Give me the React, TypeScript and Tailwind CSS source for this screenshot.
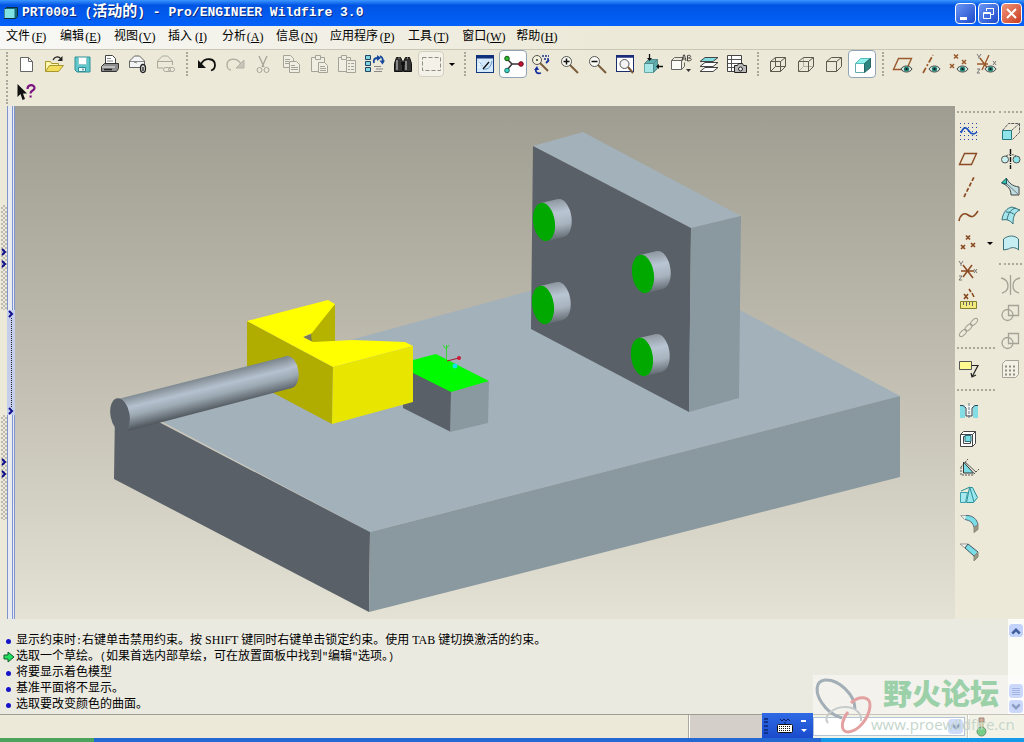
import type { ReactNode } from "react";

/* ---------- helpers ---------- */

function Ic({ children }: { children: ReactNode }) {
  return (
    <svg viewBox="0 0 24 24" className="size-6 shrink-0" fill="none" stroke="#555" strokeWidth="1" aria-hidden="true">
      {children}
    </svg>
  );
}

/* Chinese glyphs keep the base size; Latin words are serif, punctuation is half width. */
function Mixed({ text }: { text: string }) {
  const parts = text.split(/([\x20-\x7e]+)/);
  return (
    <>
      {parts.map((part, i) =>
        i % 2 === 1 ? (
          <span
            key={i}
            className={/[A-Z]/.test(part) ? "whitespace-pre font-['Liberation_Serif',serif]" : "whitespace-pre text-[10px]"}
          >
            {part}
          </span>
        ) : (
          part
        ),
      )}
    </>
  );
}

const eye = (
  <g stroke="none">
    <path d="M10 17c2-4 9-4 11 0c-2 4-9 4-11 0z" fill="#cfe6e0" stroke="#444" strokeWidth="1" />
    <circle cx="15.500" cy="17" r="2.600" fill="#1f7f72" />
    <circle cx="15.500" cy="17" r="1.100" fill="#111" />
  </g>
);

/* ---------- icons ---------- */

const icons: Record<string, ReactNode> = {
  new: (
    <>
      <path d="M6.5 5.500h8l4 4v10h-12z" fill="#fff" stroke="#666" />
      <path d="M14.500 5.500v4h4" stroke="#666" />
    </>
  ),
  open: (
    <>
      <path d="M3.500 19V9.500h5l1 2h7v3" fill="#fdf7b0" stroke="#a8962e" />
      <path d="M3.500 19.500l4-6h14l-5 6z" fill="#f2dd5c" stroke="#a8962e" />
      <path d="M11 8c2-4 6-4 8-1" stroke="#222" strokeWidth="1.300" />
      <path d="M20.500 4v5h-5z" fill="#222" stroke="none" />
    </>
  ),
  save: (
    <>
      <path d="M5 5h15v15H7l-2-2z" fill="#5ec8cc" stroke="#338f96" />
      <path d="M8.500 5.500h8v7h-8z" fill="#fff" stroke="#8fc7ca" />
      <path d="M8.500 15.500h7v4h-7z" fill="#e8fbfb" stroke="#338f96" />
      <path d="M13 16.500v2" stroke="#247" />
    </>
  ),
  print: (
    <>
      <path d="M7.500 11.500v-8h7l3 3v5z" fill="#fff" stroke="#444" />
      <path d="M9 6.500h4M9 9h6" stroke="#888" />
      <path d="M3.500 14.500l3-3h14v5l-2 3h-15z" fill="#8d8d8d" stroke="#333" />
      <path d="M4 15h13" stroke="#eee" />
      <path d="M6 17.500h8" stroke="#222" strokeWidth="1.500" />
    </>
  ),
  mail: (
    <>
      <path d="M3.500 15.500V9l5-5h5l5 5v6.500z" fill="#f4f4f4" stroke="#666" />
      <path d="M4 9.500h14M8 10l3 1" stroke="#888" />
      <ellipse cx="17" cy="16.500" rx="2.500" ry="4" fill="#ddd" stroke="#222" strokeWidth="1.300" />
      <path d="M17 15v4" stroke="#222" strokeWidth="1.300" />
    </>
  ),
  mailLink: (
    <g stroke="#aaa89c">
      <path d="M3.500 16V9l5-5h5l5 5v4M3.500 9.500h15M3.500 16h6" />
      <rect x="9.500" y="15.500" width="7" height="4" rx="2" />
      <rect x="14.500" y="15.500" width="6" height="4" rx="2" />
    </g>
  ),
  undo: (
    <>
      <path d="M6 12c4-7 14-6 14 1c0 3-2 5-4 5.500" stroke="#111" strokeWidth="1.800" />
      <path d="M3 8v8h8z" fill="#111" stroke="none" />
    </>
  ),
  redo: (
    <>
      <path d="M18 12c-4-7-14-6-14 1c0 3 2 5 4 5" stroke="#b4b2a5" strokeWidth="1.500" />
      <path d="M21 8v8h-8z" fill="#c8c6b8" stroke="#b4b2a5" />
    </>
  ),
  cut: (
    <g stroke="#a5a397">
      <path d="M8 4l5 11M16 4l-5 11" strokeWidth="1.300" />
      <circle cx="8.500" cy="18" r="2.500" />
      <circle cx="15.500" cy="18" r="2.500" />
    </g>
  ),
  copy: (
    <g stroke="#a5a397" fill="#f0eee2">
      <path d="M4.500 3.500h7l3 3v9h-10z" />
      <path d="M10.500 9.500h7l3 3v8h-10z" />
      <path d="M6 7.500h5M6 9.500h4M6 11.500h4M12 13.500h4M12 15.500h7M12 17.500h7" />
    </g>
  ),
  paste: (
    <g stroke="#a5a397" fill="#f0eee2">
      <path d="M4.500 5.500h13v14h-13z" />
      <path d="M8.500 7.500v-4h5v4z" />
      <path d="M11.500 10.500h6l3 3v7h-9z" />
      <path d="M13 14.500h5M13 16.500h6M13 18.500h6" />
    </g>
  ),
  pasteSpecial: (
    <g stroke="#a5a397" fill="#f0eee2">
      <path d="M3.500 5.500h12v14h-12z" />
      <path d="M6.500 7.500v-4h5v4z" />
      <path d="M11.500 8.500h9v12h-9z" />
      <path d="M13 11.500h2M16 11.500h3M13 14.500h2M16 14.500h3M13 17.500h2M16 17.500h3" />
    </g>
  ),
  regen: (
    <>
      <path d="M2.500 3.500h5v4h-5zM2.500 9.500h5v4h-5zM2.500 15.500h5v4h-5z" fill="#7fd6dc" stroke="#246" />
      <path d="M11 11c-1-4 1-5 4-5" stroke="#15479c" strokeWidth="1.800" />
      <path d="M14 3l4 3-4 3zM16.500 8.500l3 4 2.500-4z" fill="#15479c" stroke="none" />
      <path d="M20 9c0-3-1-4-3-5" stroke="#15479c" strokeWidth="1.600" />
      <path d="M11 14.500h7M13 17h7M11 19.500h8" stroke="#888" />
    </>
  ),
  find: (
    <g fill="#333" stroke="#111">
      <path d="M5.500 5.500h4l2 4v10h-8v-8z" />
      <path d="M14.500 5.500h4l2 6v8h-8v-10z" />
      <path d="M10 11.500h4" strokeWidth="3" />
      <path d="M6 8v10M15 9v9M7.500 6h1M16 6h1" stroke="#ddd" />
    </g>
  ),
  select: <rect x="3.500" y="5.500" width="18" height="13" stroke="#8f8d82" strokeDasharray="4 2" />,
  sketchView: (
    <>
      <rect x="3.500" y="3.500" width="17" height="17" fill="#d4eafc" stroke="#123a7c" />
      <path d="M3 5h18" stroke="#10307c" strokeWidth="3" />
      <path d="M10 17c6 1 8-3 9-8" stroke="#5b93c8" />
      <path d="M5 8l6 8" stroke="#7fa9d4" strokeDasharray="2 1" />
      <path d="M5 9h3M5 12h2M5 15h2" stroke="#fff" />
      <path d="M10 17l6-7" stroke="#111" strokeWidth="1.300" />
    </>
  ),
  nodes: (
    <>
      <path d="M6 7l5 5h8M11 12l-5 6" stroke="#333" strokeWidth="1.500" />
      <circle cx="6" cy="6.500" r="2.300" fill="#2bb52b" stroke="#175c17" />
      <circle cx="20" cy="12" r="2.300" fill="#c31432" stroke="#650a1c" />
      <circle cx="6" cy="18.500" r="2.300" fill="#3fd6c8" stroke="#17665c" />
    </>
  ),
  zoomSpin: (
    <>
      <path d="M11 11l8 8" stroke="#7a5c3a" strokeWidth="2" />
      <circle cx="8" cy="8" r="4.500" fill="#f4f2dd" stroke="#555" />
      <circle cx="8" cy="8" r="1" fill="#333" stroke="none" />
      <path d="M13 4h7M15 7h5" stroke="#15308c" strokeDasharray="2 1" strokeWidth="1.500" />
      <path d="M20 8l-3 3M12 21c-4 1-6-1-5-4" stroke="#15309c" strokeWidth="1.800" />
      <path d="M5 18l3-4 2 4z" fill="#15309c" stroke="none" />
    </>
  ),
  zoomIn: (
    <>
      <path d="M13 13l8 8" stroke="#7a5c3a" strokeWidth="2" />
      <circle cx="9.500" cy="9.500" r="5" fill="#fbfbf5" />
      <path d="M6.500 9.500h6M9.500 6.500v6" stroke="#111" strokeWidth="1.500" />
    </>
  ),
  zoomOut: (
    <>
      <path d="M13 13l8 8" stroke="#7a5c3a" strokeWidth="2" />
      <circle cx="9.500" cy="9.500" r="5" fill="#fbfbf5" />
      <path d="M6.500 9.500h6" stroke="#111" strokeWidth="1.500" />
    </>
  ),
  refit: (
    <>
      <rect x="3.500" y="3.500" width="17" height="16" fill="#fff" stroke="#1a2d6c" />
      <path d="M3 4.500h18" stroke="#1a2d7c" strokeWidth="2.500" />
      <circle cx="11.500" cy="12" r="4.500" fill="#f4f4f4" />
      <path d="M15 15l5 6" stroke="#7a5c3a" strokeWidth="2" />
    </>
  ),
  orient: (
    <>
      <path d="M3.500 11.500h9v9h-9z" fill="#a6e6e6" stroke="#6aa" />
      <path d="M3.500 11.500l4-4h9l-4 4zM12.500 20.500l4-4v-9l-4 4z" fill="#5faeb0" stroke="#588" />
      <path d="M8.500 2v5M22 14.500h-5" stroke="#111" strokeWidth="1.300" />
      <path d="M6 6h5l-2.500 3zM18 12v5l-3-2.500z" fill="#111" stroke="none" />
    </>
  ),
  named: (
    <>
      <path d="M2.500 8.500h10v9h-10z" fill="#fbfbf7" stroke="#666" />
      <path d="M2.500 8.500l3-3h9l-2 3M12.500 17.500l3-3v-4" stroke="#666" />
      <path d="M13 9l1.500-6h1L17 9M13.500 7h3M18.500 9V3.500c4-1 4 2 1 2.500c4 0 4 3-1 3" stroke="#444" />
      <path d="M17 17h5l-2.500 3z" fill="#333" stroke="none" />
    </>
  ),
  layers: (
    <g stroke="#444">
      <path d="M3 19.500l5-4h13l-5 4z" fill="#fff" />
      <path d="M3 14.500l5-4h13l-5 4z" fill="#fff" />
      <path d="M3 9.500l5-4h13l-5 4z" fill="#7fdde0" />
    </g>
  ),
  viewMgr: (
    <>
      <path d="M2.500 3.500h14v16h-14z" fill="#fff" stroke="#444" />
      <path d="M2.500 7.500h14M2.500 11.500h14M2.500 15.500h14M6.500 3.500v16" stroke="#555" />
      <path d="M9.500 13.500h3l1-2h4l1 2h3v7h-12z" fill="#b8b8b8" stroke="#222" />
      <circle cx="15.500" cy="17" r="2" fill="#eee" stroke="#222" />
    </>
  ),
  wire: <path d="M4.500 9.500h10v10h-10zM9.500 5.500h10v9h-10zM4.500 9.500l5-4M14.500 9.500l5-4M4.500 19.500l5-5M14.500 19.500l5-5" stroke="#5c5a4c" />,
  hidden: (
    <>
      <path d="M9.500 6v8.500h10M9.500 14.500l-5 5" stroke="#b0ae9e" />
      <path d="M4.500 9.500h10v10h-10zM4.500 9.500l5-4h10l-5 4M14.500 19.500l5-5v-9" stroke="#5c5a4c" />
    </>
  ),
  noHidden: <path d="M4.500 9.500h10v10h-10zM4.500 9.500l5-4h10l-5 4M14.500 19.500l5-5v-9" stroke="#5c5a4c" />,
  shaded: (
    <>
      <path d="M5.500 11.500h9v9h-9z" fill="#fff" stroke="#6aa" />
      <path d="M5.500 11.500l5-5h10l-6 5z" fill="#8ff0ea" stroke="#5bb" />
      <path d="M14.500 20.500v-9l6-5v9z" fill="#2f8580" stroke="#266" />
    </>
  ),
  datumPlane: (
    <>
      <path d="M2.500 17.500l5-11h13l-5 11z" stroke="#9a5a2c" strokeWidth="1.400" />
      {eye}
    </>
  ),
  datumAxis: (
    <>
      <path d="M4 21L14 3" stroke="#9a5a2c" strokeWidth="1.700" strokeDasharray="6 2 2 2" />
      {eye}
    </>
  ),
  datumPoint: (
    <>
      <path d="M7 2.500l4 4M11 2.500l-4 4M3 12l4 4M7 12l-4 4M15 8l4 4M19 8l-4 4" stroke="#9a5a2c" strokeWidth="1.500" />
      {eye}
    </>
  ),
  datumCsys: (
    <>
      <path d="M2 12h11M5 6l8 11M14 3L7 18" stroke="#9a5a2c" strokeWidth="1.400" />
      <path d="M2 2l2 3 2-3M4 5v2M18 9l3 4M21 9l-3 4M2 17h3l-3 4h3" stroke="#777" />
      {eye}
    </>
  ),
  help: (
    <>
      <path d="M3.500 4v13l3-3 2 6 2.500-1-2-5.500h4z" fill="#111" stroke="none" />
      <path d="M13.500 9c0-5 7-5 7-1c0 3-4 2-4 5.500" stroke="#7c1482" strokeWidth="2.200" />
      <path d="M15.500 15.500h2.200v2h-2.200z" fill="#7c1482" stroke="none" />
    </>
  ),
  sketch: (
    <>
      <path d="M3 4.500h18M3 8.500h18M3 12.500h18M3 16.500h18M3 20.500h18" stroke="#2846a8" strokeDasharray="1 3" />
      <path d="M4 14c3-8 6-5 8-2s5 4 8 1" stroke="#1c50c0" strokeWidth="1.700" />
    </>
  ),
  plane: <path d="M2.500 17.500l5-11h12l-5 11z" stroke="#8a4a22" strokeWidth="1.400" />,
  axis: <path d="M7 22L17 2" stroke="#8a4a22" strokeWidth="1.700" strokeDasharray="4 2" />,
  curve: <path d="M2 18c1-6 5-9 9-6s6 2 10-4" stroke="#8a4a22" strokeWidth="1.600" />,
  points: <path d="M9 4.500l4 4M13 4.500l-4 4M4 14l4 4M8 14l-4 4M14 12l4 4M18 12l-4 4" stroke="#8a4a22" strokeWidth="1.700" />,
  csys: (
    <>
      <path d="M4 12h13M6 6l10 13M15 6L6 18" stroke="#8a4a22" strokeWidth="1.500" />
      <path d="M2 2l2 3 2-3M4 5v2M17 10l3 4M20 10l-3 4M2 17h3l-3 4h3" stroke="#777" />
    </>
  ),
  analysis: (
    <>
      <path d="M7 7l4 5M11 7l-4 5M12 2l2 3M15 6l2 4" stroke="#8a4a22" strokeWidth="1.600" />
      <path d="M3.500 14.500h16v7h-16z" fill="#f2ea7c" stroke="#85802c" />
      <path d="M6.500 15v3M9.500 15v4M12.500 15v3M15.500 15v4" stroke="#666" />
    </>
  ),
  chain: (
    <g stroke="#a09e92">
      <ellipse cx="6" cy="18" rx="4.500" ry="2.200" transform="rotate(-45 6 18)" />
      <ellipse cx="11.500" cy="12.500" rx="4.500" ry="2.200" transform="rotate(-45 11.500 12.500)" />
      <ellipse cx="17" cy="7" rx="4.500" ry="2.200" transform="rotate(-45 17 7)" />
    </g>
  ),
  annotate: (
    <>
      <path d="M2.500 4.500h12v8h-12z" fill="#fdf890" stroke="#555" />
      <path d="M15 8.500h6L15 20M14 16l1 4 4-2" stroke="#222" strokeWidth="1.200" />
    </>
  ),
  hole: (
    <>
      <path d="M3 6h5v13H3zM16 6h5v13h-5z" fill="#84dce4" stroke="none" />
      <path d="M3 6.500h3l3 2.500v8h6V9l3-2.500h3" fill="#f6f6ee" stroke="#345" />
      <path d="M12 4v16" strokeDasharray="3 1" stroke="#678" />
    </>
  ),
  shell: (
    <>
      <path d="M3.500 7.500l3-3h12v12l-3 3h-12z" fill="#fff" stroke="#444" />
      <path d="M3.500 7.500h12v12M15.500 7.500l3-3M6.500 9.500h7v7h-7z" stroke="#444" fill="none" />
      <path d="M8 8.500h6v6H8z" fill="#7adce4" stroke="#276f78" />
    </>
  ),
  rib: (
    <>
      <path d="M4 12l7-8M4 12v8h12l6-6" stroke="#555" strokeDasharray="2 1" />
      <path d="M6.500 7v11h10z" fill="#7adce4" stroke="#333" />
      <path d="M8 7l11 10" stroke="#555" />
    </>
  ),
  draft: (
    <>
      <path d="M3.500 9.500h7l-2 10h-5z" fill="#a7e9ee" stroke="#3aa0aa" />
      <path d="M9.500 19.500l3-15h3l5 10-4 5z" fill="#9be6ec" stroke="#2c9098" />
      <path d="M4 8l9-4M13 5l4 14" stroke="#2c9098" />
    </>
  ),
  round: (
    <>
      <path d="M4 4.500h6c6 0 10 4 11 9l-4 3c-1-5-4-7-9-8z" fill="#7adce4" stroke="#567" />
      <path d="M4 4.500h5l-1 4z" fill="#eceadf" stroke="none" />
      <path d="M17 16.500l4-3v5l-4 3z" fill="#9a9888" stroke="#887" />
    </>
  ),
  chamfer: (
    <>
      <path d="M3 5h8L8 9z" fill="#f4f4ec" stroke="#999" />
      <path d="M11 5l10 8-4 4L8 9z" fill="#7adce4" stroke="#456" />
      <path d="M17 17l4-4v5l-4 4z" fill="#9a9888" stroke="#887" />
    </>
  ),
  extrude: (
    <>
      <path d="M3.500 11.500l6-7h11l-8 7M13.500 20.500l7-7v-9" stroke="#555" strokeDasharray="3 1" />
      <path d="M3.500 11.500h9v9h-9z" fill="#8fe6ea" stroke="#277880" />
    </>
  ),
  revolve: (
    <>
      <circle cx="6" cy="12.500" r="3.500" fill="#c8f0ee" />
      <circle cx="17.500" cy="12.500" r="3.500" fill="#8fe6ea" />
      <path d="M7 9c3-2 7-2 10 0" strokeDasharray="2 1" />
      <path d="M11.500 2v20" stroke="#111" strokeDasharray="5 1 1 1" strokeWidth="1.400" />
    </>
  ),
  sweep: (
    <>
      <path d="M8 4c2 4 5 7 12 8v8h-8c0-6-3-9-9-12z" fill="#bfdfe2" stroke="#444" />
      <path d="M2.500 8l5-5v6z" fill="#2fc7a5" stroke="#256" />
      <path d="M8 9l12 11" stroke="#777" />
    </>
  ),
  boundary: (
    <>
      <path d="M3 17c1-8 5-12 10-13l8 3c-5 2-7 6-7 14-3-4-7-5-11-4z" fill="#a7e5ec" stroke="#377078" />
      <path d="M8 17c1-7 4-11 9-12M7 9c4 0 7 1 9 3" stroke="#377078" />
    </>
  ),
  fill: <path d="M4.500 8c5-4 11-4 15 0v11c-3-3-7-3-10-1l-5 1z" fill="#c4eef2" stroke="#3a7078" />,
  mirror: (
    <g stroke="#a5a397" strokeWidth="1.300">
      <path d="M11.500 2v20M2 5c5 1 7 4 7 8s-2 6-6 7M21 5c-5 1-7 4-7 8s2 6 6 7" />
    </g>
  ),
  merge: (
    <g stroke="#a5a397" strokeWidth="1.300">
      <circle cx="8.500" cy="14" r="5.500" />
      <path d="M9.500 4.500h10v10h-10z" />
    </g>
  ),
  pattern: (
    <>
      <path d="M3.500 6.500l3-3h13v14l-3 3h-13z" fill="#f3f1e6" stroke="#a5a397" />
      <path d="M6 9.500h10M6 13.500h10M6 17.500h10" stroke="#8f8d82" strokeWidth="2" strokeDasharray="2 2" />
    </>
  ),
};

/* ---------- toolbar parts ---------- */

function Tool({ name, pressed = false }: { name: string; pressed?: boolean }) {
  return (
    <button
      type="button"
      aria-label={name}
      aria-pressed={pressed || undefined}
      className={
        pressed
          ? "flex size-7 shrink-0 items-center justify-center rounded border border-[#8fa4b5] bg-white"
          : "flex size-7 shrink-0 items-center justify-center"
      }
    >
      <Ic>{icons[name]}</Ic>
    </button>
  );
}

function Grip() {
  return (
    <div className="flex w-[13px] shrink-0 justify-center">
      <div className="h-6 border-l-2 border-dotted border-[#aaa89a]" />
    </div>
  );
}

function HGrip({ tall = false }: { tall?: boolean }) {
  return (
    <div className={tall ? "flex h-3.5 items-center px-0.5" : "flex h-[11px] items-center px-0.5"}>
      <div className="w-full border-t-2 border-dotted border-[#aaa89a]" />
    </div>
  );
}

const toolGroups = [
  ["sketchView", "*nodes", "zoomSpin", "zoomIn", "zoomOut", "refit", "orient", "named", "layers", "viewMgr"],
  ["wire", "hidden", "noHidden", "*shaded"],
  ["datumPlane", "datumAxis", "datumPoint", "datumCsys"],
];

const menus: [string, string][] = [
  ["文件", "F"],
  ["编辑", "E"],
  ["视图", "V"],
  ["插入", "I"],
  ["分析", "A"],
  ["信息", "N"],
  ["应用程序", "P"],
  ["工具", "T"],
  ["窗口", "W"],
  ["帮助", "H"],
];

const messages = [
  "显示约束时:右键单击禁用约束。按 SHIFT 键同时右键单击锁定约束。使用 TAB 键切换激活的约束。",
  "选取一个草绘。(如果首选内部草绘，可在放置面板中找到\"编辑\"选项。)",
  "将要显示着色模型",
  "基准平面将不显示。",
  "选取要改变颜色的曲面。",
];

/* ---------- 3D model ---------- */

function Lug({ x, y }: { x: number; y: number }) {
  return (
    <g transform={`translate(${x} ${y})`}>
      <ellipse cx="17" cy="-4" rx="10.500" ry="19" transform="rotate(-8 17 -4)" fill="url(#lug)" />
      <path d="M-3 -19L14 -23L20 15L4 19z" fill="url(#lug)" />
      <ellipse rx="10.800" ry="19.300" transform="rotate(-9)" fill="#00a800" />
    </g>
  );
}

function Model() {
  return (
    <svg viewBox="15 106 940 513" className="block h-full w-full" preserveAspectRatio="xMidYMid slice" role="img" aria-label="PRT0001">
      <defs>
        <linearGradient id="lug" gradientUnits="userSpaceOnUse" x1="0" y1="-22" x2="4" y2="18">
          <stop offset="0" stopColor="#8a949c" />
          <stop offset="0.350" stopColor="#bac5d4" />
          <stop offset="0.650" stopColor="#a8b3bf" />
          <stop offset="1" stopColor="#636b72" />
        </linearGradient>
        <linearGradient id="rod" gradientUnits="userSpaceOnUse" x1="200" y1="378" x2="208" y2="411">
          <stop offset="0" stopColor="#7d878e" />
          <stop offset="0.350" stopColor="#b5c1cf" />
          <stop offset="0.600" stopColor="#9ca8b2" />
          <stop offset="1" stopColor="#50575d" />
        </linearGradient>
      </defs>
      <polygon points="125,402 645,259 900,396 370,532" fill="#a3b1ba" />
      <polygon points="115,412 130,407 370,532 369,612 114,479" fill="#596067" />
      <polygon points="370,532 900,396 900,477 369,612" fill="#8a989f" />

      <polygon points="533,146 583,132 741,216 691,228" fill="#a3b1ba" />
      <polygon points="533,146 691,228 689,412 531,329" fill="#596067" />
      <polygon points="691,228 741,216 739,398 689,412" fill="#8a989f" />
      <Lug x={544} y={222} />
      <Lug x={543} y={305} />
      <Lug x={643} y={274} />
      <Lug x={642} y={357} />

      <polygon points="403,366 451,391 451,432 403,408" fill="#596067" />
      <polygon points="451,391 489,381 488,423 450,432" fill="#8a989f" />
      <polygon points="413,360 436,354 489,381 451,392 413,373" fill="#00fa00" />
      <path d="M446.500 345v14M443 345l3 4 3-4" stroke="#35d535" fill="none" />
      <path d="M447 361l12-3" stroke="#a81830" fill="none" />
      <circle cx="459" cy="358" r="2" fill="#d01838" />
      <circle cx="455" cy="366" r="2.500" fill="#10e4e4" />

      <polygon points="335,304 335,342 311,342 311,332" fill="#b5b200" />
      <polygon points="303,337 311,334 312,343" fill="#77785f" />
      <polygon points="247,321 333,367 332,424 247,379" fill="#b0ac00" />
      <polygon points="333,367 413,346 413,402 332,424" fill="#e8e600" />
      <polygon
        points="247,321 328,300 335,304 312,333 303,337 313,342 353,340 405,342 413,346 333,367"
        fill="#ffff00"
      />

      <ellipse cx="289" cy="372" rx="9.500" ry="16.200" transform="rotate(-8 289 372)" fill="url(#rod)" />
      <polygon points="118,399 287,356 292,388 128,431" fill="url(#rod)" />
      <ellipse cx="120" cy="415" rx="9.500" ry="17" transform="rotate(-10 120 415)" fill="#596067" />
    </svg>
  );
}

/* ---------- side strips ---------- */

function Chevron({ dir = "right" }: { dir?: "right" | "up" | "down" }) {
  const d = dir === "right" ? "M2 1l3 3-3 3" : dir === "up" ? "M1 6l3-3 3 3" : "M1 2l3 3 3-3";
  return (
    <svg
      viewBox="0 0 8 8"
      className={dir === "right" ? "size-2 shrink-0" : "size-2.5 shrink-0"}
      fill="none"
      stroke={dir === "right" ? "#10108c" : "#43609c"}
      strokeWidth="2"
      aria-hidden="true"
    >
      <path d={d} />
    </svg>
  );
}

function SashHandle() {
  return (
    <button
      type="button"
      aria-label="sash"
      className="flex h-[105px] w-1.5 flex-col items-center justify-center gap-1 bg-[repeating-conic-gradient(#bdbbb2_0_25%,#ece9d8_0_50%)] bg-[length:4px_4px]"
    >
      <Chevron />
      <Chevron />
    </button>
  );
}

function LeftRail() {
  return (
    <aside className="flex w-[15px] shrink-0">
      <div className="flex w-[9px] flex-col items-center justify-center gap-[105px]">
        <SashHandle />
        <SashHandle />
      </div>
      <div className="flex flex-1 flex-col">
        <div className="flex-1 border-x border-[#8095cc] bg-[#e8ecf2] px-px">
          <div className="h-full border-r border-[#8095cc]" />
        </div>
        <button type="button" aria-label="navigator" className="flex h-[105px] flex-col items-center bg-[#c5cdec]">
          <Chevron />
          <span className="flex-1 border-l border-dotted border-[#222]" />
          <Chevron />
        </button>
        <div className="flex-1 border-x border-[#8095cc] bg-[#e8ecf2] px-px">
          <div className="h-full border-r border-[#8095cc]" />
        </div>
      </div>
    </aside>
  );
}

function RightRail() {
  return (
    <aside className="flex w-[69px] shrink-0 bg-[#ece9d8]">
      <div className="flex w-[42px] flex-col">
        <HGrip />
        {["sketch", "plane", "axis", "curve"].map((n) => (
          <Tool key={n} name={n} />
        ))}
        <div className="flex items-center">
          <Tool name="points" />
          <button type="button" aria-label="more points" className="flex h-7 flex-1 items-center justify-center">
            <span className="border-x-3 border-t-3 border-x-transparent border-t-black" />
          </button>
        </div>
        {["csys", "analysis", "chain"].map((n) => (
          <Tool key={n} name={n} />
        ))}
        <HGrip tall />
        <Tool name="annotate" />
        <HGrip tall />
        {["hole", "shell", "rib", "draft", "round", "chamfer"].map((n) => (
          <Tool key={n} name={n} />
        ))}
      </div>
      <div className="flex min-w-0 flex-1 flex-col overflow-hidden">
        <HGrip />
        {["extrude", "revolve", "sweep", "boundary", "fill"].map((n) => (
          <Tool key={n} name={n} />
        ))}
        <HGrip tall />
        <Tool name="mirror" />
        <Tool name="merge" />
        <Tool name="merge" />
        <Tool name="pattern" />
      </div>
    </aside>
  );
}

/* ---------- page ---------- */

export default function App() {
  return (
    <div className="relative flex min-h-screen flex-col overflow-hidden bg-[#ece9d8] font-['Liberation_Mono','Noto_Sans_CJK_SC',monospace] text-xs text-black">
      <header className="flex h-[26px] shrink-0 items-center bg-linear-to-b from-[#3b95ff] via-[#0054e3] via-20% to-[#0462fa] pr-0.5 pl-1">
        <svg viewBox="0 0 14 14" className="mr-1 size-3.5" aria-hidden="true">
          <path d="M0.500 3.500l2-2h11v9l-2 2h-11z" fill="#146a78" stroke="#0c2c3c" />
          <path d="M0.500 3h10v9h-10z" fill="#7fe3e3" />
        </svg>
        <h1 className="flex-1 whitespace-pre text-[13px] leading-[26px] font-bold text-white [text-shadow:1px_1px_0_#0a2a80]">
          PRT0001 (<span className="text-[15px] leading-none">活动的</span>) - Pro/ENGINEER Wildfire 3.0
        </h1>
        <div className="flex gap-0.5">
          <button type="button" aria-label="Minimize" className="size-[21px] rounded-sm border border-white bg-linear-to-br from-[#6c95f5] to-[#1c48c8]">
            <svg viewBox="0 0 19 19" aria-hidden="true">
              <path d="M4 13h7v3H4z" fill="#fff" />
            </svg>
          </button>
          <button type="button" aria-label="Restore" className="size-[21px] rounded-sm border border-white bg-linear-to-br from-[#6c95f5] to-[#1c48c8]">
            <svg viewBox="0 0 19 19" fill="none" stroke="#fff" aria-hidden="true">
              <path d="M7.500 7V4.500h7v6H12M7 4.500h8" />
              <path d="M4.500 8.500h7v6h-7zM4 9.500h8" />
            </svg>
          </button>
          <button type="button" aria-label="Close" className="size-[21px] rounded-sm border border-white bg-linear-to-br from-[#f09478] to-[#c8381c]">
            <svg viewBox="0 0 19 19" stroke="#fff" strokeWidth="2" aria-hidden="true">
              <path d="M5 5l9 9M14 5l-9 9" />
            </svg>
          </button>
        </div>
      </header>

      <nav className="flex h-[23px] shrink-0 items-center gap-3 bg-linear-to-r from-[#f8f8f6] to-[#ece9d8] to-60% pb-px pl-1.5">
        {menus.map(([label, key]) => (
          <button key={key} type="button" className="flex items-center whitespace-nowrap leading-5">
            {label}
            <span className="w-[18px] text-center font-['Liberation_Serif',serif]">
              (<u>{key}</u>)
            </span>
          </button>
        ))}
      </nav>

      <div className="flex h-[29px] shrink-0 items-center border-t border-[#c9c6b6]">
        <Grip />
        <div className="-ml-px flex items-center">
          {["new", "open", "save", "print", "mail", "mailLink"].map((n) => (
            <Tool key={n} name={n} />
          ))}
          <Grip />
          {["undo", "redo", "cut", "copy", "paste", "pasteSpecial", "regen", "find"].map((n) => (
            <Tool key={n} name={n} />
          ))}
          <button type="button" aria-label="select box" className="mx-px flex h-[26px] w-[26px] items-center justify-center rounded-sm border border-[#d3d0c2] bg-[#f3f1e8]">
            <Ic>{icons.select}</Ic>
          </button>
          <button type="button" aria-label="select options" className="flex h-7 w-[13px] items-center justify-center">
            <span className="border-x-3 border-t-3 border-x-transparent border-t-black" />
          </button>
          {toolGroups.map((group) => (
            <div key={group[0]} className="flex items-center">
              <Grip />
              {group.map((n) => (
                <Tool key={n} name={n.replace("*", "")} pressed={n.startsWith("*")} />
              ))}
            </div>
          ))}
        </div>
      </div>
      <div className="flex h-7 shrink-0 items-center">
        <Grip />
        <div className="-ml-px">
          <Tool name="help" />
        </div>
      </div>

      <main className="flex min-h-0 flex-1 basis-[513px]">
        <LeftRail />
        <section className="min-w-0 flex-1 bg-linear-to-b from-[#9f9d91] via-[#c0bdb0] to-[#e4e2d5]">
          <Model />
        </section>
        <RightRail />
      </main>

      <section className="flex h-[95px] shrink-0 bg-[#ebeae1]">
        <ul className="flex-1 pt-3.5 pl-1">
          {messages.map((m, i) => (
            <li key={m} className="flex h-4 items-center whitespace-nowrap leading-4">
              <span className="flex h-3 w-3 shrink-0 items-center">
                {i === 1 ? (
                  <svg viewBox="0 0 12 12" className="-ml-px size-3" aria-hidden="true">
                    <path d="M1 4h4V1l6 5-6 5V8H1z" fill="#22e060" stroke="#0c5c28" />
                  </svg>
                ) : (
                  <span className="ml-0.5 size-[5px] rounded-full bg-[#1414c8]" />
                )}
              </span>
              <span className="whitespace-nowrap">
                <Mixed text={m} />
              </span>
            </li>
          ))}
        </ul>
        <div className="flex w-4 flex-col bg-[#fbfbf8] pt-1">
          <button type="button" aria-label="Scroll up" className="flex h-[15px] items-center justify-center rounded-sm border border-white bg-[#c3d3fb]">
            <Chevron dir="up" />
          </button>
          <div className="flex-1" />
          <div className="flex h-4 flex-col items-center justify-center gap-px rounded-sm border border-white bg-[#a9bff6]">
            <span className="h-px w-2 bg-[#6484d4]" />
            <span className="h-px w-2 bg-[#6484d4]" />
            <span className="h-px w-2 bg-[#6484d4]" />
            <span className="h-px w-2 bg-[#6484d4]" />
          </div>
          <button type="button" aria-label="Scroll down" className="flex h-[15px] items-center justify-center rounded-sm border border-white bg-[#a9bff6]">
            <Chevron dir="down" />
          </button>
        </div>
      </section>

      <footer className="flex h-6 shrink-0 items-stretch border-t border-[#a09e92]">
        <div className="flex-1" />
        <div className="flex w-[336px]">
          <div className="w-0.5 border-l border-[#aca899] bg-white" />
          <div className="w-[72px] bg-[#d5cfca]" />
          <div className="-mt-0.5 flex w-[51px] items-center justify-between bg-linear-to-b from-[#2f6ae4] to-[#1a4bcc] pr-1.5 pl-0.5">
            <div className="h-4 w-1 border-x-2 border-dotted border-[#10338f]" />
            <svg viewBox="0 0 18 16" className="h-4 w-[18px]" aria-hidden="true">
              <path d="M4 1l2 2 2-2 2 2 2-2 2 2M9 4v3" stroke="#071c58" fill="none" />
              <rect x="1.500" y="6.500" width="15" height="8" rx="1" fill="#fff" stroke="#111" />
              <path d="M3 8.500h12M3 10.500h12M3 12.500h12" stroke="#111" strokeDasharray="1 1" />
            </svg>
            <svg viewBox="0 0 6 16" className="h-4 w-1.5" fill="#fff" aria-hidden="true">
              <path d="M0 2h5v2H0zM0 11h6l-3 3z" />
            </svg>
          </div>
          <div className="flex w-[152px] items-center">
            <div className="relative w-full">
              <select aria-label="filter" className="block h-[19px] w-full appearance-none border border-[#7f9db9] bg-white" />
              <span className="pointer-events-none absolute inset-y-0.5 right-0.5 flex w-[15px] items-center justify-center rounded-sm bg-[#b0c4f6]">
                <Chevron dir="down" />
              </span>
            </div>
          </div>
          <div className="ml-0.5 w-0.5 border-l border-[#aca899] bg-white" />
          <div className="flex flex-1 items-center pl-1.5">
            <svg viewBox="0 0 12 20" className="h-5 w-3" aria-hidden="true">
              <path d="M4 1h5v4H4z" fill="#b07454" stroke="#5c3828" />
              <path d="M5 5h3v6H5z" fill="#f0e47c" stroke="#7c7636" />
              <circle cx="6.500" cy="14.500" r="4.500" fill="#1fae38" stroke="#0c4c1c" />
            </svg>
          </div>
        </div>
      </footer>

      <div className="flex h-1 shrink-0">
        <div className="w-[9.200%] bg-[#4ba35c]" />
        <div className="w-[71%] bg-[#2468d4]" />
        <div className="flex-1 bg-[#149ae8]" />
      </div>

      <div className="pointer-events-none absolute right-0 bottom-1 flex w-[211px] bg-white/40">
        <svg viewBox="0 0 62 63" className="h-[63px] w-[62px] shrink-0" fill="none" aria-hidden="true">
          <path d="M42 34C42 20 26 4 12 5C2 6 2 18 9 28C14 36 22 41 29 43" stroke="#a3afb6" strokeWidth="3" />
          <path d="M6 8C1 16 7 27 14 34" stroke="#a3afb6" strokeWidth="2" />
          <path d="M15 48C9 42 20 32 32 32C42 32 49 38 48 46" stroke="#c6cbcb" strokeWidth="2" />
          <path d="M38 28C46 20 58 21 57 31C56 43 46 56 35 57C27 57 28 46 35 37" stroke="#e3a2a1" strokeWidth="3" />
        </svg>
        <div className="flex flex-col pt-[7px] whitespace-nowrap">
          <strong className="pl-2 text-[29px] leading-[32px] font-black text-[#9bd0a9]">野火论坛</strong>
          <span className="-ml-1 font-['Open_Sans',sans-serif] text-[15px] leading-5 text-[#c4d6cb]">www.proewildfire.cn</span>
        </div>
      </div>
    </div>
  );
}
